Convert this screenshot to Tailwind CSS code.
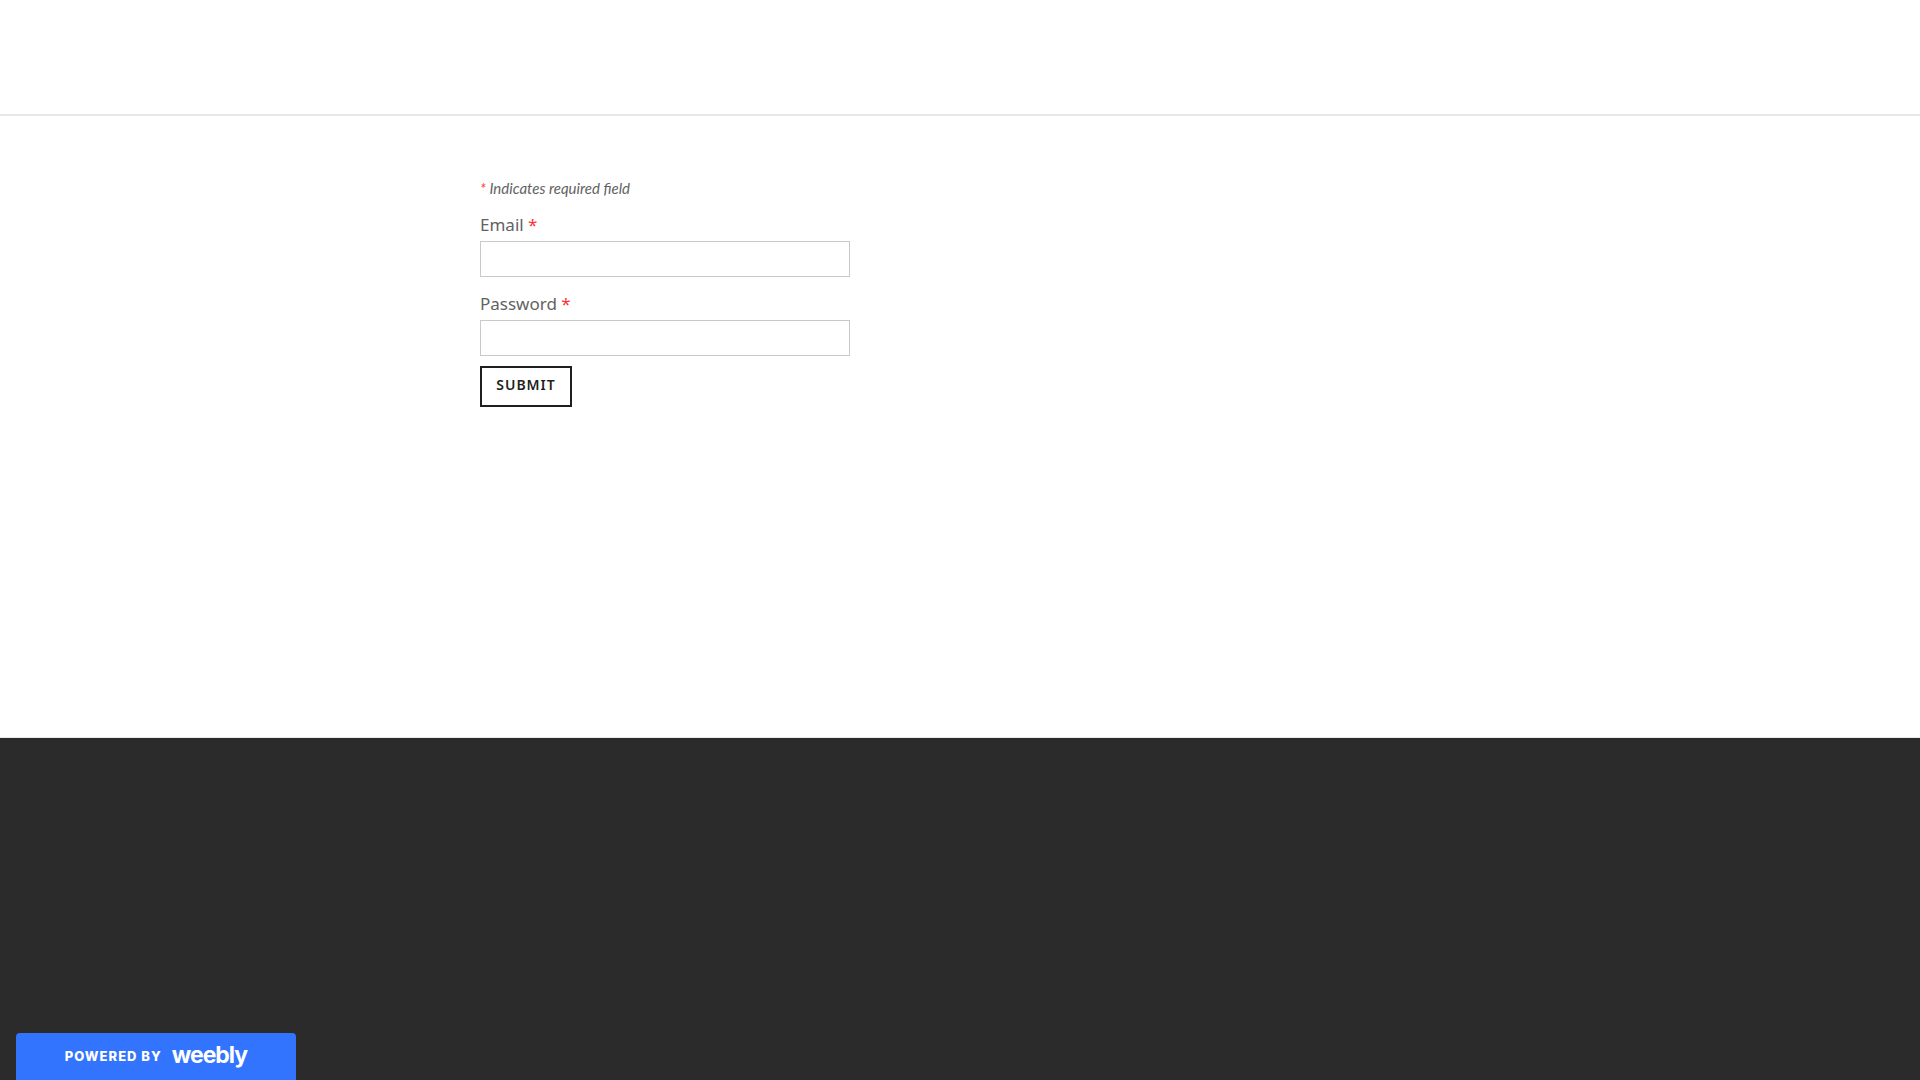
<!DOCTYPE html>
<html lang="en">
<head>
    <meta charset="UTF-8">
    <meta name="viewport" content="width=device-width, initial-scale=1.0">
    <title>Member Login</title>
    <script src="https://cdn.jsdelivr.net/npm/@tailwindcss/browser@4"></script>
</head>
<body class="flex min-h-screen flex-col bg-white font-['Noto_Sans',sans-serif] text-[#626262]">
    <header class="h-29 border-b-2 border-[#e8e8e8]"></header>

    <main class="min-h-[622px] border-b border-[#e8e8e8] pt-15">
        <form class="mx-auto flex max-w-[960px] flex-col items-start">
            <p class="mb-3 font-['Lato',sans-serif] text-[15px] leading-6 italic"><span class="text-[#ff3333]">*</span> Indicates required field</p>

            <label for="email" class="mb-1 text-[17px] leading-[25px]">Email <span class="text-[#ff3333]">*</span></label>
            <input id="email" type="text" class="mb-3.5 h-9 w-[370px] border border-[#c9c9c9] bg-white px-2 text-sm">

            <label for="password" class="mb-1 text-[17px] leading-[25px]">Password <span class="text-[#ff3333]">*</span></label>
            <input id="password" type="password" class="mb-2.5 h-9 w-[370px] border border-[#c9c9c9] bg-white px-2 text-sm">

            <button type="submit" class="h-[41px] w-[92px] border-2 border-[#1f1f1f] pb-1 text-sm font-semibold tracking-[1px] text-[#1f1f1f]">SUBMIT</button>
        </form>
    </main>

    <footer class="flex grow items-end bg-[#2b2b2b] px-4">
        <a href="#" class="flex h-[47px] w-[280px] items-center justify-center gap-2.5 rounded-t bg-[#3374ff] font-['Inter',sans-serif] text-white">
            <span class="text-[13px] font-extrabold tracking-[1px]">POWERED BY</span>
            <span class="pb-0.5 text-[23px] font-bold tracking-[-1px]">weebly</span>
        </a>
    </footer>
</body>
</html>
